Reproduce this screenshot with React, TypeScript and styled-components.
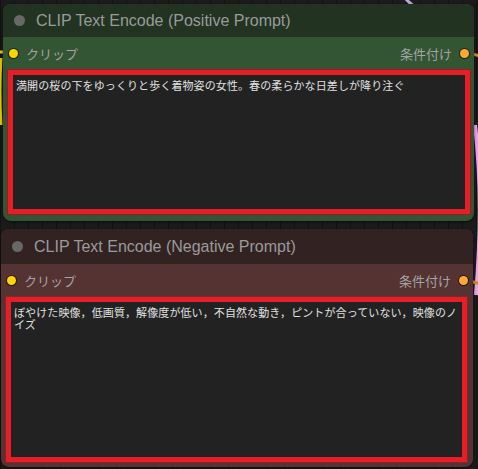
import styled, { createGlobalStyle } from "styled-components";

const GlobalStyle = createGlobalStyle`
  html, body {
    margin: 0;
    padding: 0;
    background: #1b1b1b;
  }
  body {
    font-family: "Liberation Sans", "Noto Sans CJK JP", sans-serif;
    overflow: hidden;
  }
`;

const Canvas = styled.div`
  position: relative;
  width: 478px;
  height: 469px;
  padding-top: 4px;
  box-sizing: border-box;
  display: flex;
  flex-direction: column;
  gap: 8px;
  background-color: #1b1b1b;
  background-image: repeating-linear-gradient(
    90deg,
    rgba(0, 0, 0, 0.35) 0 1px,
    transparent 1px 14px
  );
`;

const Wires = styled.svg`
  position: absolute;
  inset: 0;
  pointer-events: none;
  z-index: 0;
`;

const Node = styled.div<{ $left: number; $width: number; $body: string; $pad: number }>`
  position: relative;
  z-index: 1;
  margin-left: ${(p) => p.$left}px;
  width: ${(p) => p.$width}px;
  background: ${(p) => p.$body};
  border-radius: 8px;
  padding-bottom: ${(p) => p.$pad}px;
  box-shadow: 0 1px 3px rgba(0, 0, 0, 0.6);
`;

const Title = styled.div<{ $bg: string; $height: number }>`
  height: ${(p) => p.$height}px;
  background: ${(p) => p.$bg};
  border-radius: 8px 8px 0 0;
  display: flex;
  align-items: center;
  gap: 11px;
  padding-left: 11px;
  color: #9a9a9a;
  font-size: 16px;
`;

const TitleDot = styled.span`
  flex-shrink: 0;
  width: 11px;
  height: 11px;
  border-radius: 50%;
  background: #686868;
`;

const Slots = styled.div`
  height: 33px;
  display: flex;
  align-items: center;
  justify-content: space-between;
  padding: 0 5px 0 6px;
  font-family: "Noto Sans CJK JP", sans-serif;
  font-size: 13px;
  color: #a4a4a4;
`;

const Slot = styled.div`
  display: flex;
  align-items: center;
  gap: 8px;
`;

const SlotDot = styled.span<{ $color: string }>`
  flex-shrink: 0;
  width: 9px;
  height: 9px;
  border-radius: 50%;
  background: ${(p) => p.$color};
  box-shadow: 0 0 0 1px rgba(0, 0, 0, 0.55);
`;

const Frame = styled.div<{ $height: number; $ml: number; $mr: number }>`
  height: ${(p) => p.$height}px;
  margin: 0 ${(p) => p.$mr}px 0 ${(p) => p.$ml}px;
  border: 5px solid #e41f27;
  box-shadow: 0 0 0 1px #8a2424;
  box-sizing: border-box;
  display: flex;
`;

const Prompt = styled.textarea`
  flex: 1;
  margin: 0;
  border: none;
  outline: none;
  resize: none;
  background: #222;
  color: #e0e0e0;
  padding: 4px 0 4px 3px;
  font-family: "Noto Sans CJK JP", sans-serif;
  font-size: 11px;
  letter-spacing: 0.1px;
  line-height: 12px;
  overflow: hidden;
`;

const nodes = [
  {
    title: "CLIP Text Encode (Positive Prompt)",
    head: "#223322",
    body: "#335533",
    left: 3,
    width: 471,
    titleH: 33,
    frameH: 144,
    ml: 5,
    mr: 4,
    pad: 7,
    text: "満開の桜の下をゆっくりと歩く着物姿の女性。春の柔らかな日差しが降り注ぐ",
  },
  {
    title: "CLIP Text Encode (Negative Prompt)",
    head: "#332222",
    body: "#553333",
    left: 1,
    width: 472,
    titleH: 35,
    frameH: 165,
    ml: 5,
    mr: 6,
    pad: 5,
    text: "ぼやけた映像，低画質，解像度が低い，不自然な動き，ピントが合っていない，映像のノイズ",
  },
];

export default function App() {
  return (
    <>
      <GlobalStyle />
      <Canvas>
        <Wires width="478" height="469">
          <path d="M405 -2 Q412 6 420 10" stroke="#b9a9d9" strokeWidth="3" fill="none" />
          <path d="M-6 52 L4 52" stroke="#e6c200" strokeWidth="3" fill="none" />
          <path d="M1 58 Q-1 90 1 125" stroke="#e6c200" strokeWidth="3" fill="none" />
          <path d="M469 53 L480 56" stroke="#d08a20" strokeWidth="3" fill="none" />
          <path d="M475 125 Q484 200 476 295" stroke="#e9a0e9" strokeWidth="4" fill="none" />
          <path d="M470 281 L480 284" stroke="#d08a20" strokeWidth="3" fill="none" />
        </Wires>
        {nodes.map((n) => (
          <Node key={n.title} $left={n.left} $width={n.width} $body={n.body} $pad={n.pad}>
            <Title $bg={n.head} $height={n.titleH}>
              <TitleDot />
              {n.title}
            </Title>
            <Slots>
              <Slot>
                <SlotDot $color="#ffd500" />
                クリップ
              </Slot>
              <Slot>
                条件付け
                <SlotDot $color="#ffa931" />
              </Slot>
            </Slots>
            <Frame $height={n.frameH} $ml={n.ml} $mr={n.mr}>
              <Prompt readOnly defaultValue={n.text} spellCheck={false} />
            </Frame>
          </Node>
        ))}
      </Canvas>
    </>
  );
}
